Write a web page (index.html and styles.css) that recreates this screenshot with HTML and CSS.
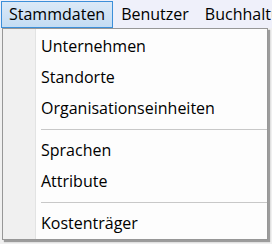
FILE: index.html
```
<!DOCTYPE html>
<html>
    <head>
        <meta charset="UTF-8">
        <title>Stammdaten</title>
        <link rel="stylesheet" href="styles.css">
    </head>
    <body>
        <div class="menubar">
            <div class="top active">Stammdaten</div>
            <div class="top">Benutzer</div>
            <div class="top">Buchhaltung</div>
        </div>
        <div class="dropdown">
            <div class="item">Unternehmen</div>
            <div class="item">Standorte</div>
            <div class="item">Organisationseinheiten</div>
            <div class="sep"></div>
            <div class="item">Sprachen</div>
            <div class="item">Attribute</div>
            <div class="sep"></div>
            <div class="item">Kostenträger</div>
        </div>
    </body>
</html>
```

FILE: styles.css
```
body {
    margin: 0;
    width: 272px;
    height: 244px;
    overflow: hidden;
    background-color: #f0f0f0;
    font-family: "Open Sans", sans-serif;
    font-size: 16px;
    color: #000;
    position: relative;
}
.menubar {
    display: flex;
    height: 28px;
    background-color: #eff0fa;
    white-space: nowrap;
    overflow: hidden;
}
.top {
    padding: 0 7px;
    line-height: 25px;
    border: 1px solid transparent;
    margin-top: 1px;
    height: 25px;
}
.top.active {
    margin-left: 1px;
    border-color: #3c8fd9;
    background: linear-gradient(#dbe9f7, #c4dcf3);
}
.dropdown {
    position: absolute;
    left: 2px;
    top: 28px;
    width: 264px;
    height: 208px;
    border: 1px solid #979797;
    background: linear-gradient(to right, #f0f0f0 32px, #e2e3e3 32px, #e2e3e3 33px, #fdfdfd 33px);
    box-shadow: 2px 2px 1px rgba(0, 0, 0, 0.35);
    padding-top: 2px;
}
.item {
    height: 31px;
    line-height: 31px;
    padding-left: 38px;
}
.sep {
    height: 1px;
    margin: 5px 0 5px 38px;
    background-color: #c8c8c8;
}
```
